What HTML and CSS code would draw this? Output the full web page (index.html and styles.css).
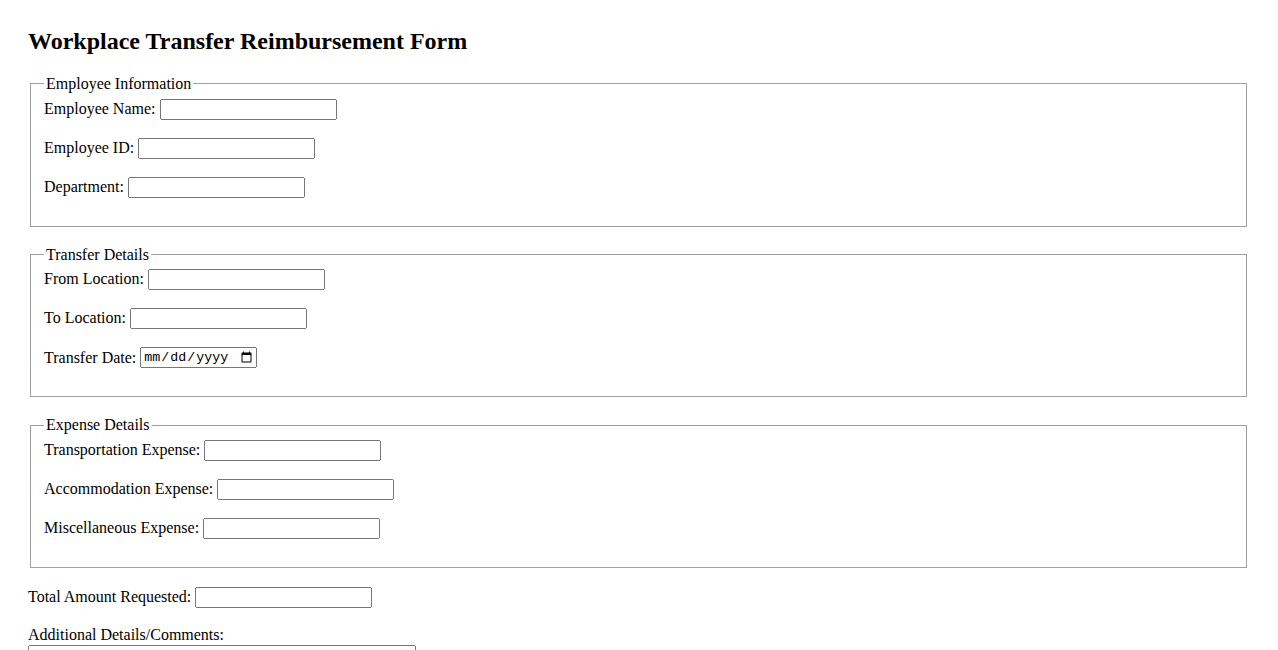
FILE: index.html
```html
<!DOCTYPE html>
<html lang="en">
<head>
<meta charset="utf-8">
<title>Workplace Transfer Reimbursement Form</title>
<link rel="stylesheet" href="styles.css">
</head>
<body>
<h2 class="title">Workplace Transfer Reimbursement Form</h2>
<form class="form">
  <fieldset class="section">
    <legend class="section-legend">Employee Information</legend>
    <div class="row"><label>Employee Name:</label> <input class="field" type="text"></div>
    <div class="row"><label>Employee ID:</label> <input class="field" type="text"></div>
    <div class="row"><label>Department:</label> <input class="field" type="text"></div>
  </fieldset>
  <fieldset class="section">
    <legend class="section-legend">Transfer Details</legend>
    <div class="row"><label>From Location:</label> <input class="field" type="text"></div>
    <div class="row"><label>To Location:</label> <input class="field" type="text"></div>
    <div class="row row-date"><label>Transfer Date:</label> <input class="date" type="date"></div>
  </fieldset>
  <fieldset class="section">
    <legend class="section-legend">Expense Details</legend>
    <div class="row"><label>Transportation Expense:</label> <input class="field" type="text"></div>
    <div class="row"><label>Accommodation Expense:</label> <input class="field" type="text"></div>
    <div class="row"><label>Miscellaneous Expense:</label> <input class="field" type="text"></div>
  </fieldset>
  <div class="row"><label>Total Amount Requested:</label> <input class="field" type="text"></div>
  <div class="comments">
    <label class="block-label">Additional Details/Comments:</label>
    <textarea class="notes" rows="5"></textarea>
  </div>
</form>
</body>
</html>
```

FILE: styles.css
```css
html, body {
  background: #fff;
}
body {
  margin: 0;
  padding: 28px 29px 28px 28px;
  font-family: "Liberation Serif", "Times New Roman", serif;
  font-size: 16px;
  color: #000;
}
.title {
  margin: 0 0 19.92px 0;
  font-size: 24px;
  font-weight: bold;
}
.form {
  margin: 0;
}
.section {
  margin: 0 2px 19px 2px;
  padding: 5.6px 13px 10px 13px;
  border: 1px solid #a0a0a0;
}
.section-legend {
  padding: 0 2px;
}
.row {
  margin-bottom: 18px;
}
.field {
  box-sizing: border-box;
  width: 177px;
  height: 21px;
  font-family: "Liberation Sans", Arial, sans-serif;
  font-size: 13.33px;
}
.date {
  box-sizing: border-box;
  width: 117px;
  height: 21px;
  vertical-align: 2px;
  font-family: "Liberation Mono", "DejaVu Sans Mono", monospace;
  font-size: 13.33px;
}
.block-label {
  display: block;
}
.notes {
  display: block;
  box-sizing: border-box;
  width: 388px;
  margin-top: 1px;
  font-family: "Liberation Mono", monospace;
  font-size: 13.33px;
}
```
